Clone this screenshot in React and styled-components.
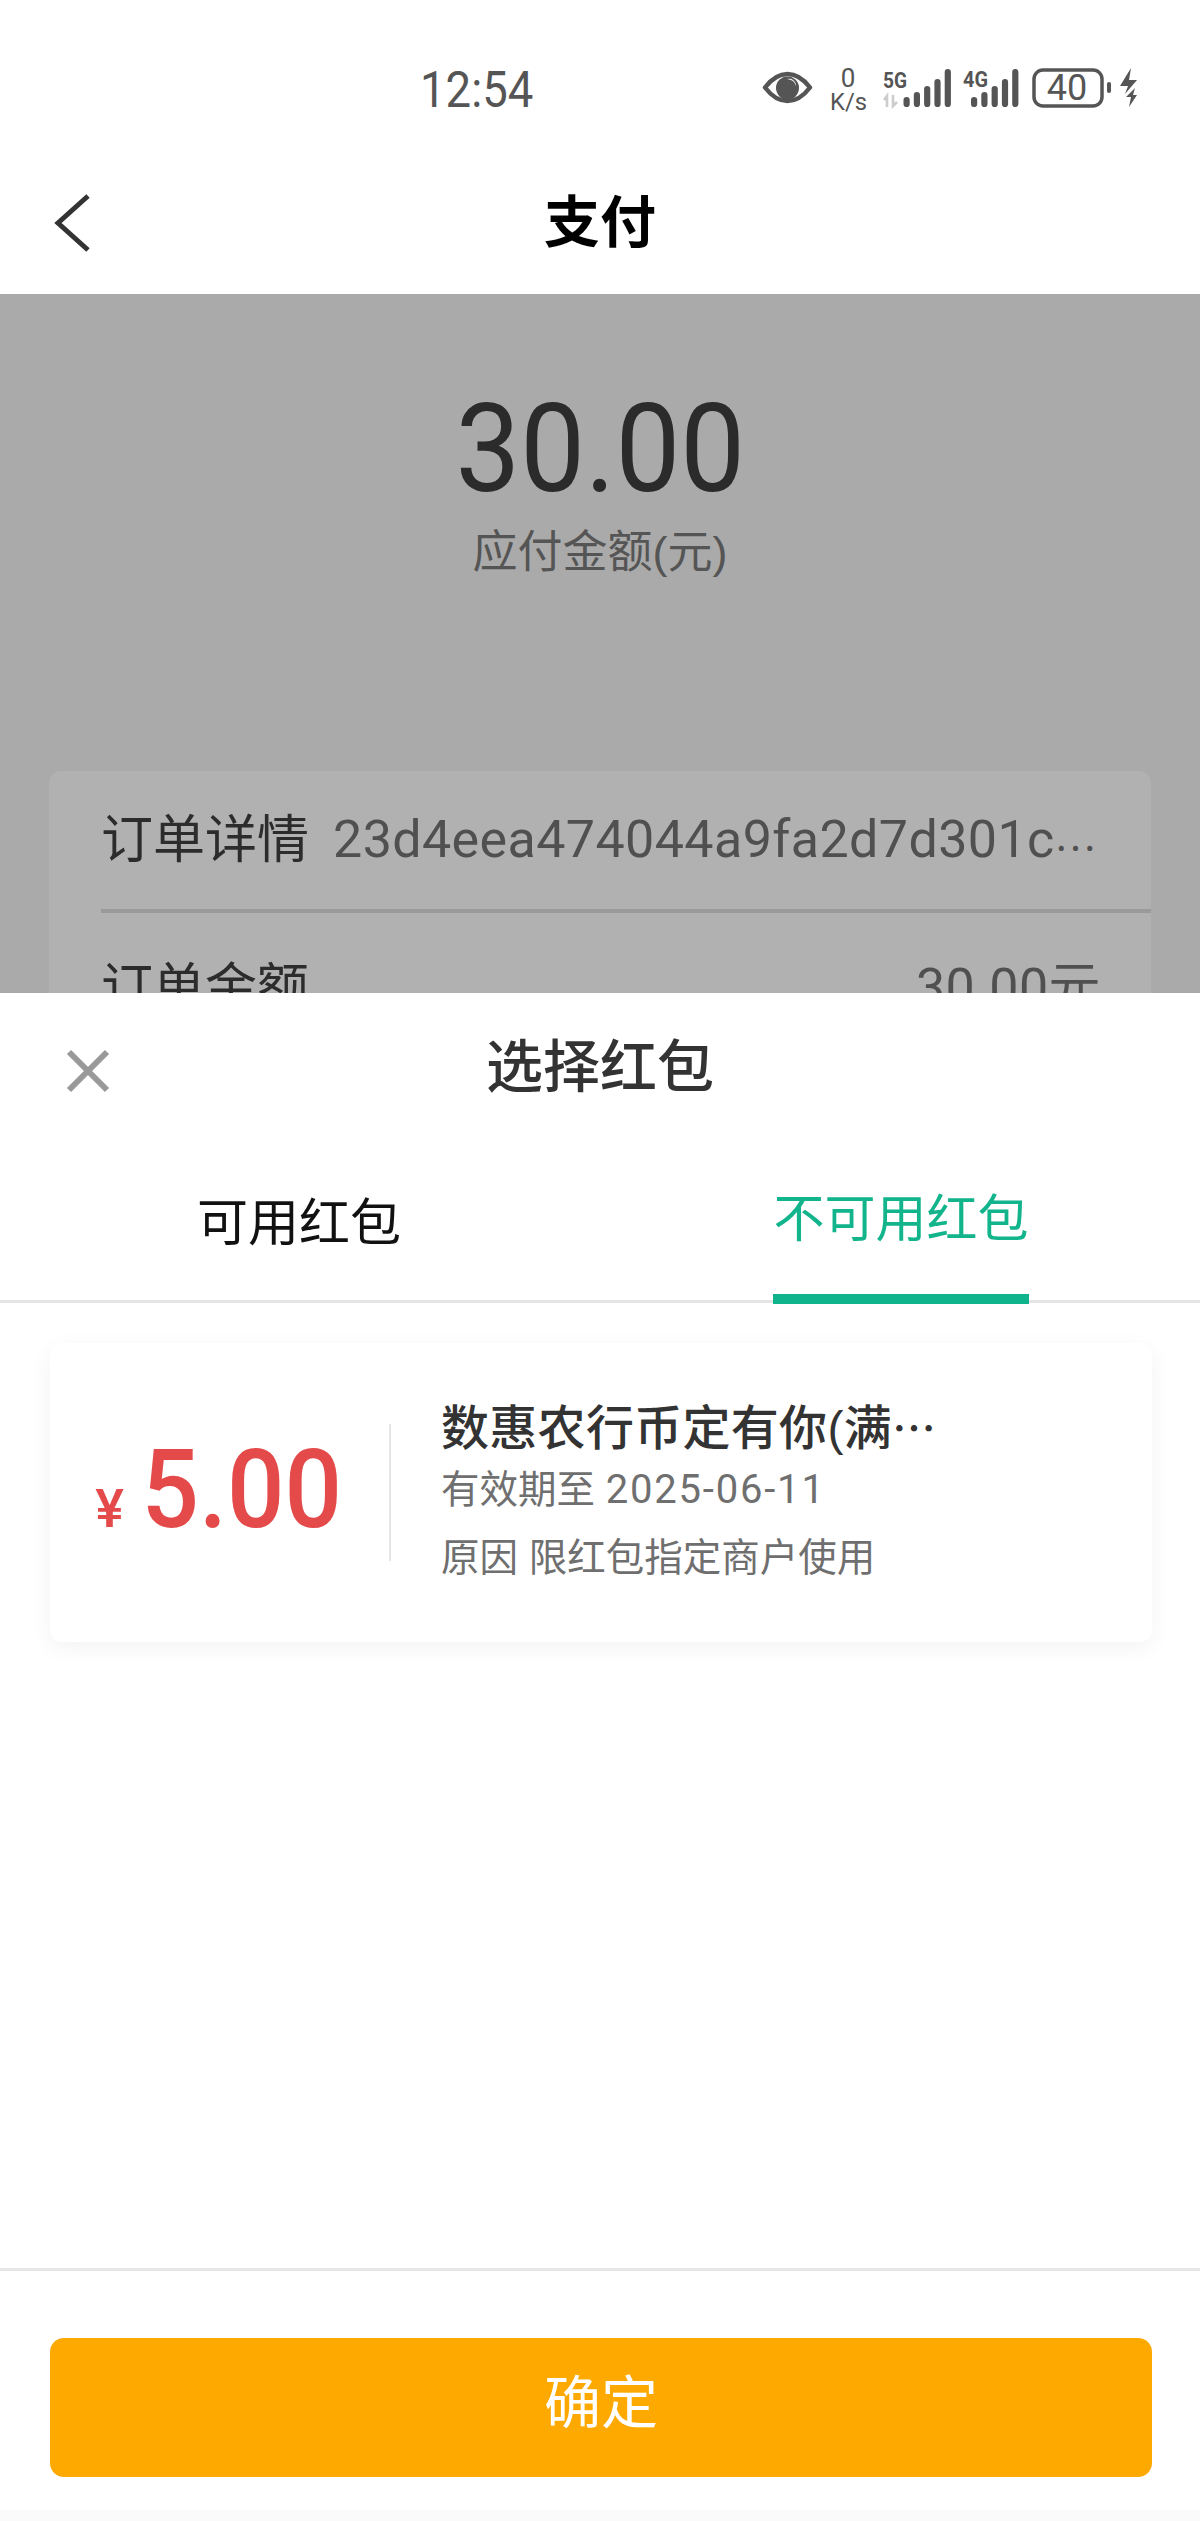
import React from "react";
import styled, { createGlobalStyle } from "styled-components";

const Global = createGlobalStyle`
  html, body { margin: 0; padding: 0; background: #fff; }
  body { font-family: "Liberation Sans", "Noto Sans CJK SC", sans-serif; }
`;
const Sans = `"Roboto", "Noto Sans CJK SC", sans-serif`;
const Cjk = `"Liberation Sans", "Noto Sans CJK SC", sans-serif`;
const CjkOnly = `"Noto Sans CJK SC", sans-serif`;

const Page = styled.div`
  width: 1200px; height: 2521px; display: flex; flex-direction: column; overflow: hidden; background: #fff;
`;
const StatusBar = styled.div`
  height: 165px; flex: none; display: flex; align-items: flex-start; background: #fff;
`;
const Time = styled.div`
  margin: 63px 0 0 420px; font: 400 50px/54px ${Sans}; color: #555; transform: scaleX(.91); transform-origin: left center;
`;
const StatusIcons = styled.svg`
  margin: 60px 50px 0 auto; flex: none; display: block;
`;
const NavBar = styled.div`
  height: 129px; flex: none; box-sizing: border-box; padding-bottom: 13px; display: grid; grid-template-columns: 1fr auto 1fr; align-items: center; background: #fff;
`;
const Back = styled.svg`
  margin-left: 53px; display: block;
`;
const NavTitle = styled.div`
  font: 700 56px/60px ${Cjk}; color: #000;
`;
const Dimmed = styled.div`
  height: 699px; flex: none; background: #aaa; display: flex; flex-direction: column; align-items: center; overflow: hidden;
`;
const Amount = styled.div`
  margin-top: 95px; font: 400 122px/122px ${Sans}; color: #2b2b2b; transform: scaleX(.945);
`;
const AmountLabel = styled.div`
  margin-top: 12px; font: 400 45px/60px ${Cjk}; color: #555;
`;
const OrderCard = styled.div`
  margin-top: 188px; width: 1102px; height: 300px; background: #b1b1b1; border-radius: 12px; flex: none;
`;
const OrderRow = styled.div`
  height: 142px; margin-left: 52px; display: flex; align-items: center; justify-content: space-between; padding-right: 50px;
  border-bottom: 4px solid #9a9a9a; box-sizing: border-box;
`;
const OrderRowLast = styled.div`
  height: 150px; margin-left: 52px; display: flex; align-items: center; justify-content: space-between; padding-right: 50px;
`;
const OrderKey = styled.div`
  font: 400 52px/60px ${Cjk}; color: #2c2c2c; flex: none;
`;
const OrderValue = styled.div`
  font: 400 52px/60px ${Sans}; color: #505050; margin-left: 24px; letter-spacing: .4px; white-space: nowrap; flex: 1; text-align: ${p => (p.$right ? "right" : "left")};
`;
const Dots = styled.span`
  font-family: ${CjkOnly}; font-size: ${p => p.$size}px; position: relative; top: ${p => p.$lift || 0}px;
`;
const Sheet = styled.div`
  flex: 1; min-height: 0; background: #fff; display: flex; flex-direction: column;
`;
const SheetHead = styled.div`
  height: 150px; flex: none; display: grid; grid-template-columns: 1fr auto 1fr; align-items: start;
`;
const Close = styled.svg`
  margin: 56px 0 0 66px; display: block;
`;
const SheetTitle = styled.div`
  margin-top: 41px; font: 500 57px/66px ${Cjk}; color: #333;
`;
const Tabs = styled.div`
  height: 157px; flex: none; display: flex; border-bottom: 3px solid #e4e4e4;
`;
const Tab = styled.div`
  flex: 1; display: flex; justify-content: center; padding-left: ${p => (p.$active ? 4 : 0)}px;
`;
const TabLabel = styled.div`
  margin-top: ${p => (p.$active ? 45 : 49)}px; height: ${p => (p.$active ? 112 : 108)}px;
  font: 400 51px/64px ${Cjk}; color: ${p => (p.$active ? "#12b48c" : "#111")}; position: relative;
  ${p => p.$active && `&::after { content: ""; position: absolute; left: 0; right: 0; bottom: -4px; height: 10px; background: #10b48c; }`}
`;
const Coupon = styled.div`
  margin: 40px 48px 0 50px; height: 299px; flex: none; background: #fff; border-radius: 12px;
  box-shadow: 0 6px 22px rgba(0,0,0,.05); display: flex; align-items: center;
`;
const Price = styled.div`
  width: 339px; flex: none; display: flex; align-items: baseline; justify-content: flex-end; padding: 0 47px 6px 0; box-sizing: border-box; color: #e44a4a;
`;
const Yen = styled.span`
  font: 500 54px/1 ${Sans}; margin-right: 0;
`;
const PriceNum = styled.span`
  font: 500 110px/1 ${Sans}; transform: scaleX(.92); transform-origin: right center; display: inline-block;
`;
const Divider = styled.div`
  width: 2px; height: 137px; background: #e6e6e6; flex: none;
`;
const Info = styled.div`
  margin: 0 0 6px 50px; display: flex; flex-direction: column;
`;
const InfoTitle = styled.div`
  font: 500 48px/58px ${Cjk}; color: #333; letter-spacing: .3px;
`;
const InfoLine = styled.div`
  font: 400 38.5px/50px ${Cjk}; color: #6f6f6f; margin-top: ${p => p.$gap}px;
`;
const DateText = styled.span`
  font: 400 40px/50px ${Sans}; letter-spacing: 1.8px;
`;
const Spacer = styled.div`flex: 1;`;
const Footer = styled.div`
  height: 242px; flex: none; border-top: 3px solid #e6e6e6; box-sizing: border-box; padding: 67px 48px 0 50px; background: #fff;
`;
const Confirm = styled.div`
  height: 139px; background: #fea900; border-radius: 14px; display: flex; align-items: center; justify-content: center;
  box-sizing: border-box; padding-bottom: 9px; font: 400 57px/1 ${Cjk}; color: #fff;
`;
const HomeStrip = styled.div`
  height: 11px; flex: none; background: #fafafa;
`;

const BAR_H = [10, 15, 21, 28, 38];
const Bars = ({ x }) => BAR_H.map((h, i) => (
  <rect key={i} x={x + i * 10.3} y={107 - h} width="6.2" height={h} rx="3.1" fill="#555" />
));

export default function App() {
  return (
    <Page>
      <Global />
      <StatusBar>
        <Time>12:54</Time>
        <StatusIcons width="400" height="60" viewBox="750 60 400 60">
          <path d="M765 87.5 C773 77 781 74 787.5 74 C794 74 802 77 810 87.5 C802 98 794 101 787.5 101 C781 101 773 98 765 87.5Z" fill="none" stroke="#555" strokeWidth="4.5" strokeLinejoin="round" />
          <circle cx="787.5" cy="88" r="11.5" fill="#555" />
          <path d="M787 79 a10 9 0 0 1 9 7 a7 7 0 0 0 -9 -7z" fill="#fff" />
          <text x="848" y="87" fontFamily="Roboto" fontSize="26" fill="#555" textAnchor="middle">0</text>
          <text x="830" y="110" fontFamily="Roboto" fontSize="24" fill="#555" textLength="37" lengthAdjust="spacingAndGlyphs">K/s</text>
          <text x="883" y="88" fontFamily="Roboto" fontWeight="700" fontSize="22" fill="#555" textLength="24" lengthAdjust="spacingAndGlyphs">5G</text>
          <path d="M887 107 V96 L884 100 M893 95 V106 L897 102" stroke="#ccc" strokeWidth="2.6" fill="none" />
          <Bars x={903.5} />
          <text x="963" y="87" fontFamily="Roboto" fontWeight="700" fontSize="22" fill="#555" textLength="25" lengthAdjust="spacingAndGlyphs">4G</text>
          <Bars x={971} />
          <rect x="1034" y="70" width="68" height="36" rx="9" fill="none" stroke="#555" strokeWidth="3.5" />
          <text x="1067" y="100" fontFamily="Roboto" fontSize="36" fill="#555" textAnchor="middle">40</text>
          <rect x="1107" y="82" width="4" height="11" rx="2" fill="#555" />
          <path d="M1131 68 L1120 86 L1128 86 L1125 94 L1137 80 L1129 80 Z M1135 88 L1126 97 L1131 97 L1129 107 L1137 95 L1133 95 Z" fill="#555" />
        </StatusIcons>
      </StatusBar>
      <NavBar>
        <Back width="40" height="60" viewBox="0 0 40 60">
          <path d="M35 3 L5 30 L35 57" fill="none" stroke="#333" strokeWidth="5" />
        </Back>
        <NavTitle>支付</NavTitle>
      </NavBar>
      <Dimmed>
        <Amount>30.00</Amount>
        <AmountLabel>应付金额(元)</AmountLabel>
        <OrderCard>
          <OrderRow>
            <OrderKey>订单详情</OrderKey>
            <OrderValue>23d4eea474044a9fa2d7d301c<Dots $size={38} $lift={-6}>⋯</Dots></OrderValue>
          </OrderRow>
          <OrderRowLast>
            <OrderKey>订单金额</OrderKey>
            <OrderValue $right>30.00元</OrderValue>
          </OrderRowLast>
        </OrderCard>
      </Dimmed>
      <Sheet>
        <SheetHead>
          <Close width="44" height="44" viewBox="0 0 44 44">
            <path d="M3 3 L41 41 M41 3 L3 41" stroke="#999" strokeWidth="6" fill="none" />
          </Close>
          <SheetTitle>选择红包</SheetTitle>
        </SheetHead>
        <Tabs>
          <Tab><TabLabel>可用红包</TabLabel></Tab>
          <Tab $active><TabLabel $active>不可用红包</TabLabel></Tab>
        </Tabs>
        <Coupon>
          <Price><Yen>¥</Yen><PriceNum>5.00</PriceNum></Price>
          <Divider />
          <Info>
            <InfoTitle>数惠农行币定有你(满<Dots $size={44}>⋯</Dots></InfoTitle>
            <InfoLine $gap={7}>有效期至 <DateText>2025-06-11</DateText></InfoLine>
            <InfoLine $gap={18}>原因 限红包指定商户使用</InfoLine>
          </Info>
        </Coupon>
        <Spacer />
        <Footer><Confirm>确定</Confirm></Footer>
        <HomeStrip />
      </Sheet>
    </Page>
  );
}
